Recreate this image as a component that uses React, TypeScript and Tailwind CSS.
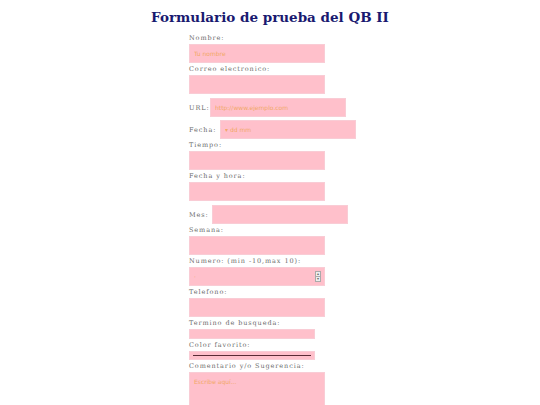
import React from "react";

const labelCls =
  "block h-[12px] text-[6.5px] leading-[12px] tracking-[0.9px] text-[#6b6b6b] font-['DejaVu_Serif',serif]";
const inputCls =
  "block h-[19px] w-[136px] border border-[#f9ccd5] bg-[#ffc0cb] px-[4px] text-[6px] text-[#f0a060] outline-none placeholder:text-[#f2a866] font-['DejaVu_Sans',sans-serif]";

function Field({ label, placeholder }: { label: string; placeholder?: string }) {
  return (
    <>
      <label className={labelCls}>{label}</label>
      <input type="text" placeholder={placeholder} className={inputCls} />
    </>
  );
}

function InlineField({
  label,
  placeholder,
  offset,
}: {
  label: string;
  placeholder?: string;
  offset: string;
}) {
  return (
    <div className="flex items-center">
      <label className={labelCls + " " + offset}>{label}</label>
      <input type="text" placeholder={placeholder} className={inputCls + " w-[135px]"} />
    </div>
  );
}

export default function App() {
  return (
    <div className="min-h-[405px] w-full bg-white">
      <h1 className="pt-[8px] text-center text-[13.5px] font-bold leading-[18px] text-[#191970] font-['DejaVu_Serif',serif]">
        Formulario de prueba del QB II
      </h1>
      <form className="mt-[6px] flex flex-col pl-[189px]">
        <Field label="Nombre:" placeholder="Tu nombre" />
        <Field label="Correo electronico:" />
        <div className="mt-[4px]">
          <InlineField label="URL:" placeholder="http://www.ejemplo.com" offset="w-[21px]" />
        </div>
        <div className="mt-[3px]">
          <InlineField label="Fecha:" placeholder="▾ dd mm" offset="w-[31px]" />
        </div>
        <Field label="Tiempo:" />
        <Field label="Fecha y hora:" />
        <div className="mt-[4px]">
          <InlineField label="Mes:" offset="w-[23px]" />
        </div>
        <Field label="Semana:" />
        <label className={labelCls}>Numero: (min -10,max 10):</label>
        <div className="relative w-[136px]">
          <input type="text" placeholder="·" className={inputCls} />
          <span className="absolute right-[4px] top-[4px] flex h-[11px] w-[6px] flex-col border border-[#aaa] bg-[#eee]">
            <span className="flex h-1/2 items-center justify-center border-b border-[#aaa] text-[4px] leading-none text-[#666]">
              ▴
            </span>
            <span className="flex h-1/2 items-center justify-center text-[4px] leading-none text-[#666]">
              ▾
            </span>
          </span>
        </div>
        <Field label="Telefono:" />
        <label className={labelCls}>Termino de busqueda:</label>
        <input
          type="text"
          className="block h-[10px] w-[126px] border border-[#f9ccd5] bg-[#ffc0cb] outline-none"
        />
        <label className={labelCls + " h-[11px] leading-[11px]"}>Color favorito:</label>
        <div className="flex h-[9px] w-[126px] items-center border border-[#f9ccd5] bg-[#ffc0cb] px-[3px]">
          <span className="block h-[1.5px] w-full bg-[#5a2a35]" />
        </div>
        <label className={labelCls}>Comentario y/o Sugerencia:</label>
        <textarea
          placeholder="Escribe aquí..."
          className="block h-[40px] w-[136px] resize-none border border-[#f9ccd5] bg-[#ffc0cb] px-[4px] py-[4px] text-[6px] outline-none placeholder:text-[#f2a866] font-['DejaVu_Sans',sans-serif]"
        />
      </form>
    </div>
  );
}
